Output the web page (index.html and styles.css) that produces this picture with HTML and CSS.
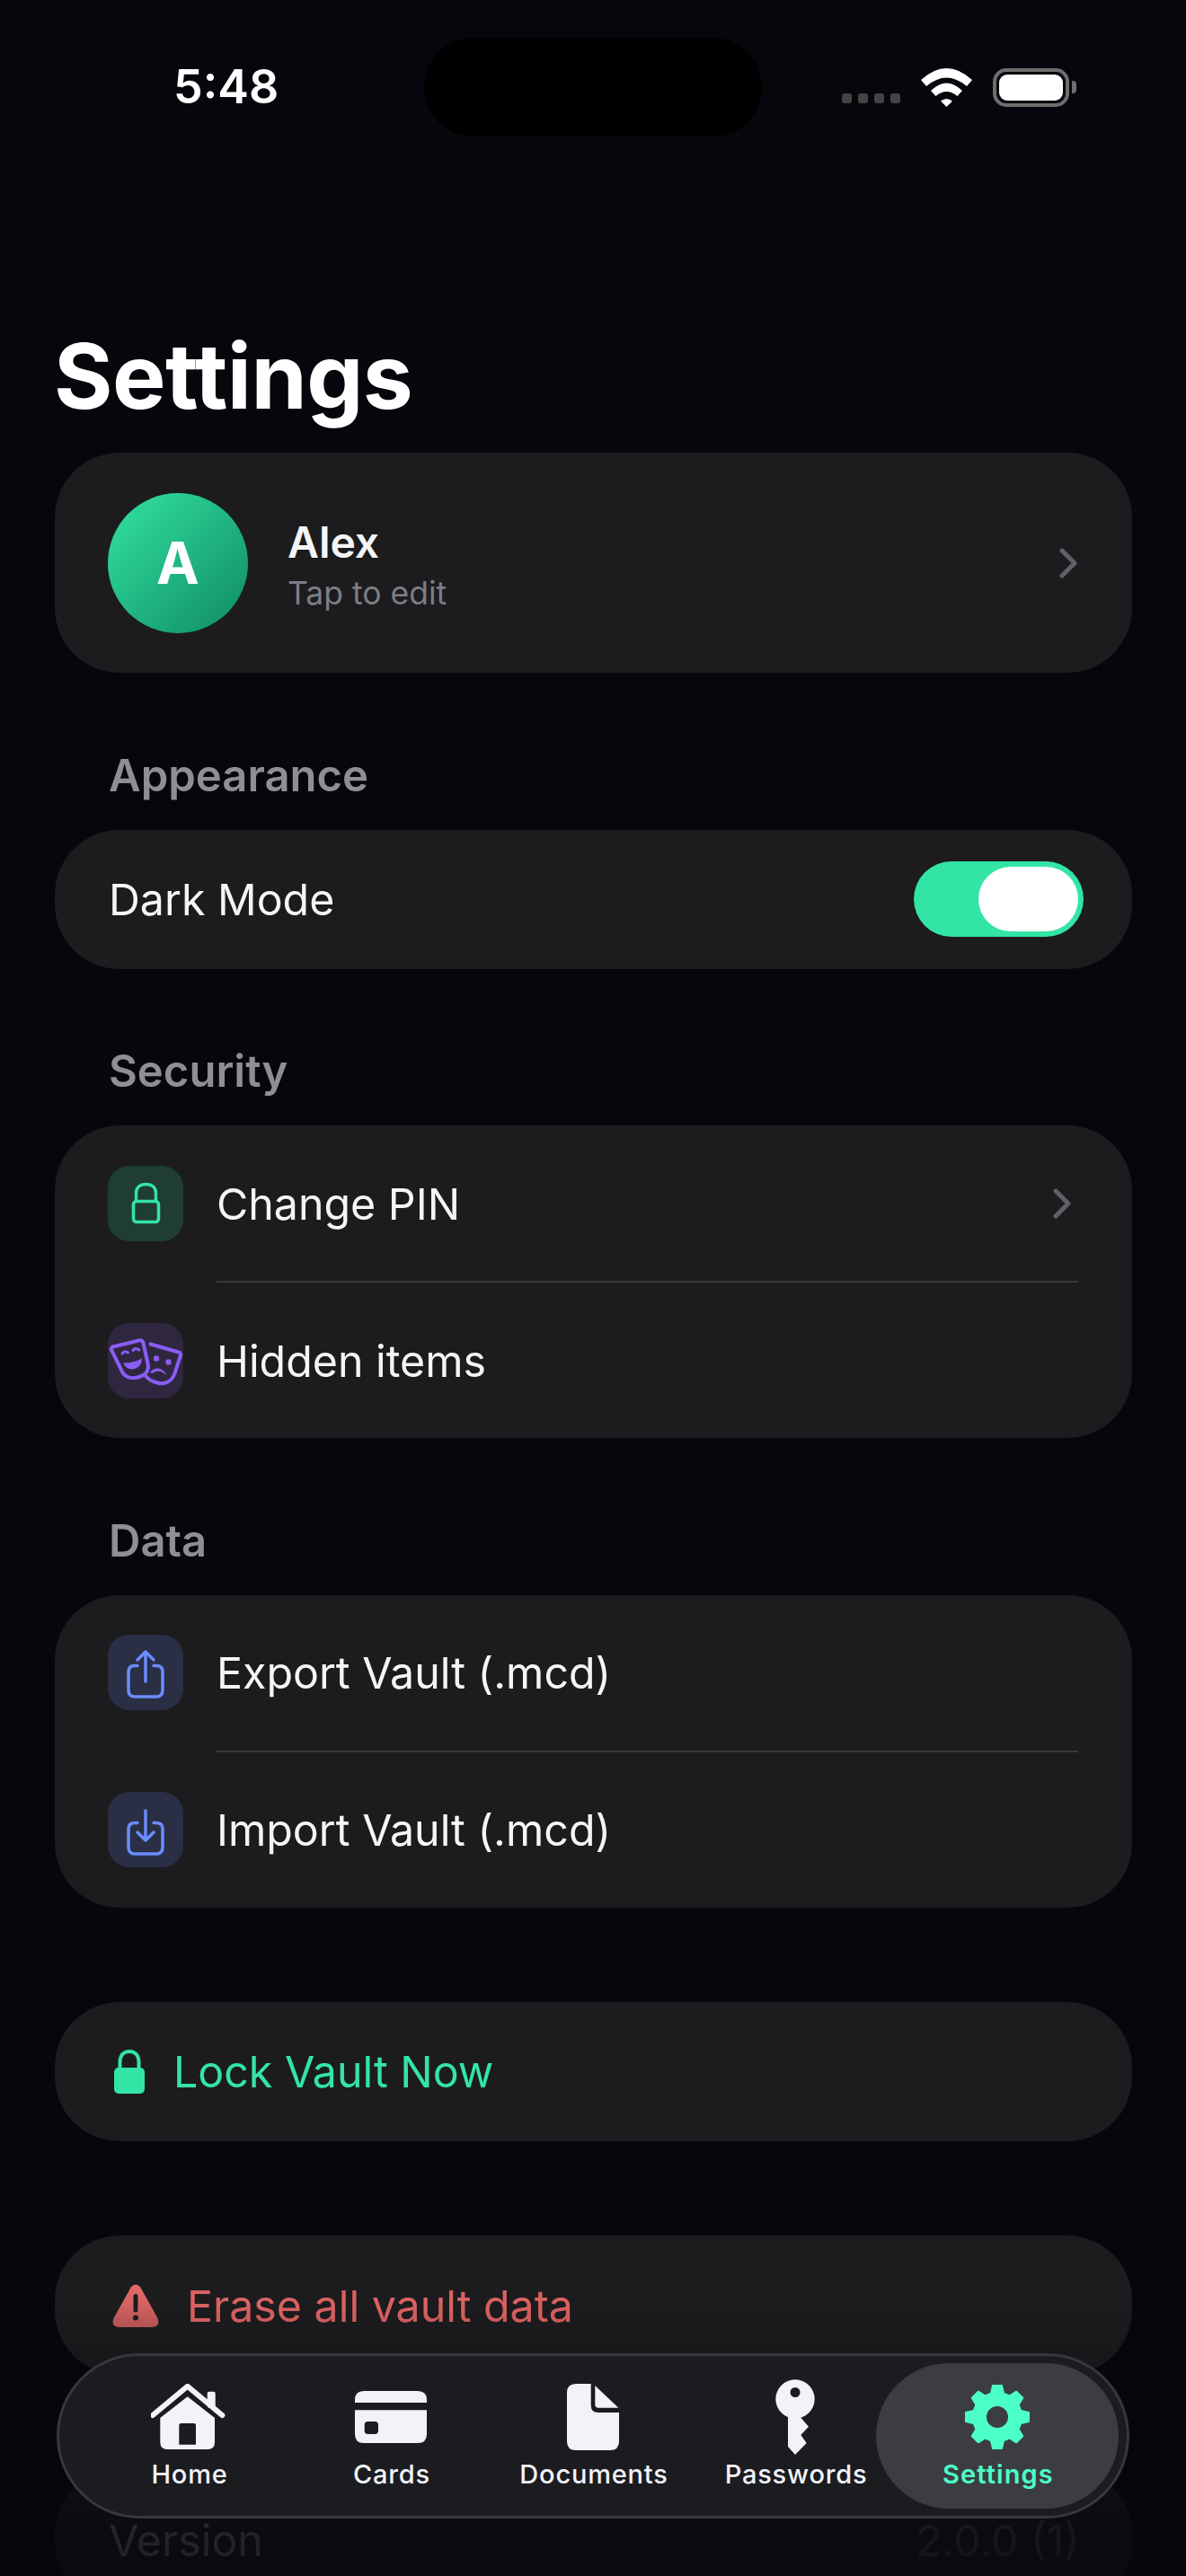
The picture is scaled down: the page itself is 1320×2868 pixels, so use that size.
FILE: index.html
```html
<!DOCTYPE html>
<html lang="en">
<head>
<meta charset="utf-8">
<title>Settings</title>
<link rel="stylesheet" href="styles.css">
</head>
<body>
<div class="screen">
  <header class="status">
    <span class="time">5:48</span>
    <div class="island"></div>
    <div class="status-right">
      <div class="signal"><i></i><i></i><i></i><i></i></div>
      <svg class="wifi" viewBox="0 0 57 43"><path d="M0 13Q28.500 -13 57 13L51 20Q28.500 1 6 20Z"/><path d="M11 25Q28.500 8 46 25L40.500 31Q28.500 21 16.500 31Z"/><path d="M22 36.500Q28.500 31.500 35 36.500L28.500 43Z"/></svg>
      <div class="battery"><div class="battery-level"></div></div>
      <div class="battery-nub"></div>
    </div>
  </header>

  <main class="content">
    <h1 class="title">Settings</h1>

    <section class="card profile">
      <div class="avatar">A</div>
      <div class="profile-text">
        <div class="profile-name">Alex</div>
        <div class="profile-sub">Tap to edit</div>
      </div>
      <svg class="chevron" viewBox="0 0 20 34"><path d="M3 3L17 17L3 31"/></svg>
    </section>

    <h2 class="section-label">Appearance</h2>
    <section class="card row-single">
      <span class="row-text">Dark Mode</span>
      <div class="toggle"><div class="toggle-thumb"></div></div>
    </section>

    <h2 class="section-label">Security</h2>
    <section class="card">
      <div class="row row-chevron">
        <div class="icon-box icon-green">
          <svg viewBox="0 0 84 84"><rect x="28.500" y="39.500" width="28" height="23" rx="3.500"/><path d="M31.500 39V30.500C31.500 24 36 20.500 42.500 20.500S53.500 24 53.500 30.500V39"/></svg>
        </div>
        <span class="row-text">Change PIN</span>
        <svg class="chevron" viewBox="0 0 20 34"><path d="M3 3L17 17L3 31"/></svg>
      </div>
      <div class="divider"></div>
      <div class="row">
        <div class="icon-box icon-purple">
          <svg viewBox="0 0 84 84">
            <path d="M5.500 26.500L34.500 19.500C37 19 39 20 39.500 22.500L44.500 45C46.500 54 41 58.500 33 60.500C24.500 62.500 17.500 59.500 14.500 51L4 30C3.500 28.500 4 27 5.500 26.500Z"/>
            <path d="M47.500 23.500L79 32.500C80.500 33 81.500 34.500 81 36L74.500 56C71.500 65 63.500 69 55 66.500C49 65 44 62 41.500 58"/>
            <path class="solid" d="M16 34Q19 30 22.500 33M28 30.500Q31 27 35 30"/>
            <path class="fill" d="M17 44.500Q27 45 38 39.500Q38 48 30 51Q21 53 17 44.500Z"/>
            <circle class="fill" cx="54" cy="39.500" r="3.200"/><circle class="fill" cx="67.500" cy="43.500" r="3.200"/>
            <path class="fill" d="M47 55Q56 44 66 58L62.500 56Q56 51 49.500 56Z"/>
          </svg>
        </div>
        <span class="row-text">Hidden items</span>
      </div>
    </section>

    <h2 class="section-label">Data</h2>
    <section class="card">
      <div class="row">
        <div class="icon-box icon-blue">
          <svg viewBox="0 0 84 84"><path d="M33 34.500H30C25 34.500 23 37 23 41.500V61.500C23 66.500 25.500 69 30 69H54C58.500 69 61 66.500 61 61.500V41.500C61 37 58.500 34.500 54 34.500H51"/><path d="M42 52V20M33 28L42 19L51 28"/></svg>
        </div>
        <span class="row-text">Export Vault (.mcd)</span>
      </div>
      <div class="divider"></div>
      <div class="row">
        <div class="icon-box icon-blue">
          <svg viewBox="0 0 84 84"><path d="M33 34.500H30C25 34.500 23 37 23 41.500V61.500C23 66.500 25.500 69 30 69H54C58.500 69 61 66.500 61 61.500V41.500C61 37 58.500 34.500 54 34.500H51"/><path d="M42 21V53M33 45L42 54L51 45"/></svg>
        </div>
        <span class="row-text">Import Vault (.mcd)</span>
      </div>
    </section>

    <section class="card row-single action action-lock">
      <svg class="lock-solid" viewBox="0 0 34 50"><path class="shackle" d="M6.500 22V14C6.500 6.500 10.500 2 17 2S27.500 6.500 27.500 14V22"/><rect x="0" y="20" width="34" height="29" rx="5"/></svg>
      <span class="action-text-green">Lock Vault Now</span>
    </section>

    <section class="card row-single action action-erase">
      <svg class="warn" viewBox="0 0 52 48"><defs><linearGradient id="warnGrad" x1="0" y1="0" x2="0" y2="1"><stop offset="0" stop-color="#e46a6a"/><stop offset="1" stop-color="#c45a5a"/></linearGradient></defs><path fill="url(#warnGrad)" fill-rule="evenodd" d="M21 3Q26 -2 31 3L50.500 38Q54 47 44 48H8Q-2 47 1.500 38ZM23.500 13.500V29Q23.500 31.500 26 31.500T28.500 29V13.500Q28.500 11 26 11T23.500 13.500ZM26 34.500A3 3 0 1 0 26 40.500A3 3 0 1 0 26 34.500Z"/></svg>
      <span class="action-text-red">Erase all vault data</span>
    </section>

    <section class="card row-single version">
      <span class="version-label">Version</span>
      <span class="version-value">2.0.0 (1)</span>
    </section>
  </main>

  <div class="fade"></div>

  <nav class="tabbar">
    <div class="tab">
      <svg class="tab-icon" width="84" height="74" viewBox="0 0 84 74"><path class="roof" d="M2 35L40.700 2.700L79.300 35"/><rect x="62.700" y="8.700" width="9" height="18" rx="2"/><path fill-rule="evenodd" d="M40.700 14.300L71 38V65Q71 73 63 73H18.300Q10.300 73 10.300 65V38ZM33.300 44Q31.300 44 31.300 46V67.700H50V46Q50 44 48 44Z"/></svg>
      <span class="tab-label">Home</span>
    </div>
    <div class="tab">
      <svg class="tab-icon" width="80" height="74" viewBox="0 0 80 74"><path d="M10 8H70Q80 8 80 18V21H0V18Q0 8 10 8Z"/><path fill-rule="evenodd" d="M0 29.300H80V56Q80 66 70 66H10Q0 66 0 56ZM14.500 42Q10.700 42 10.700 45.700V52.300Q10.700 56 14.500 56H22.200Q26 56 26 52.300V45.700Q26 42 22.200 42Z"/></svg>
      <span class="tab-label">Cards</span>
    </div>
    <div class="tab">
      <svg class="tab-icon" width="58" height="74" viewBox="0 0 58 74"><path d="M10 0H26.700V24Q26.700 32 34.700 32H58V64Q58 74 48 74H10Q0 74 0 64V10Q0 0 10 0Z"/><path d="M31.300 2L57.300 26.700H35Q31.300 26.700 31.300 23Z"/></svg>
      <span class="tab-label">Documents</span>
    </div>
    <div class="tab">
      <svg class="tab-icon key" width="44" height="84" viewBox="0 0 44 84"><path fill-rule="evenodd" d="M22 0.300A21.700 21.700 0 1 1 22 43.700A21.700 21.700 0 1 1 22 0.300ZM22 9A5.500 5.500 0 1 0 22 20A5.500 5.500 0 1 0 22 9Z"/><path d="M14 38V75L22 84L34.700 71L28.300 62L37 52.700L28.300 42.700V36Z"/></svg>
      <span class="tab-label">Passwords</span>
    </div>
    <div class="tab tab-active">
      <svg class="tab-icon" width="72" height="74" viewBox="0 0 72 74"><g transform="translate(0 1)"><circle class="gear-ring" cx="36" cy="36" r="20"/><path class="gear-tooth" d="M31 1H41L44 14H28Z"/><path class="gear-tooth" d="M31 1H41L44 14H28Z" transform="rotate(45 36 36)"/><path class="gear-tooth" d="M31 1H41L44 14H28Z" transform="rotate(90 36 36)"/><path class="gear-tooth" d="M31 1H41L44 14H28Z" transform="rotate(135 36 36)"/><path class="gear-tooth" d="M31 1H41L44 14H28Z" transform="rotate(180 36 36)"/><path class="gear-tooth" d="M31 1H41L44 14H28Z" transform="rotate(225 36 36)"/><path class="gear-tooth" d="M31 1H41L44 14H28Z" transform="rotate(270 36 36)"/><path class="gear-tooth" d="M31 1H41L44 14H28Z" transform="rotate(315 36 36)"/></g></svg>
      <span class="tab-label">Settings</span>
    </div>
  </nav>
</div>
</body>
</html>
```

FILE: styles.css
```css
* { box-sizing: border-box; }
html, body { margin: 0; padding: 0; background: #05070c; }
body { font-family: Inter, "Liberation Sans", sans-serif; color: #f5f5f7; }

.screen { position: relative; width: 1320px; height: 2868px; overflow: hidden; background: #05070c; }

.status { display: flex; align-items: center; justify-content: space-between; height: 194px; padding: 0 122px 0 193px; }
.time { font-size: 52px; font-weight: 600; color: #fff; line-height: 1; }
.island { position: absolute; left: 472px; top: 42px; width: 376px; height: 110px; border-radius: 55px; background: #000; }
.status-right { display: flex; align-items: center; }
.signal { display: flex; gap: 7px; margin-top: 24px; margin-right: 23px; }
.signal i { width: 11px; height: 11px; border-radius: 3px; background: #444; }
.wifi { width: 57px; height: 43px; fill: #fff; margin-right: 23px; }
.battery { width: 85px; height: 43px; border: 4px solid #6e6e6e; border-radius: 15px; padding: 3px; }
.battery-level { width: 100%; height: 100%; border-radius: 9px; background: #fff; }
.battery-nub { width: 5px; height: 14px; margin-left: 3px; border-radius: 0 4px 4px 0; background: #6e6e6e; }

.content { padding: 0 60px 0 61px; }
.title { margin: 179px 0 39px -1px; font-size: 100px; font-weight: 700; line-height: 92px; color: #fff; letter-spacing: -0.5px; }

.card { background: #1c1c1e; border-radius: 72px; }
.profile { display: flex; align-items: center; height: 245px; padding: 0 61px 0 59px; }
.avatar { display: flex; align-items: center; justify-content: center; flex: none; width: 156px; height: 156px; border-radius: 50%; background: linear-gradient(135deg, #33e3a0, #0f8a64); color: #fff; font-size: 64px; font-weight: 700; }
.profile-text { flex: 1; margin-left: 44px; padding-top: 3px; }
.profile-name { font-size: 48px; font-weight: 600; line-height: 60px; color: #f5f5f7; }
.profile-sub { margin-top: 5px; font-size: 35.500px; line-height: 44px; color: #7d7d85; }

.chevron { flex: none; width: 20px; height: 34px; fill: none; stroke: #5f6068; stroke-width: 5; stroke-linecap: round; stroke-linejoin: round; }

.section-label { margin: 84.500px 0 30px 60px; font-size: 49px; font-weight: 600; line-height: 60px; color: #8e8e93; }

.row-single { display: flex; align-items: center; justify-content: space-between; height: 155px; padding: 0 54px 0 60px; }
.row-text { flex: 1; padding-top: 2px; font-size: 48.300px; line-height: 60px; color: #f5f5f7; }

.toggle { display: flex; justify-content: flex-end; width: 189px; height: 84px; padding: 6px; border-radius: 42px; background: #33e5a5; }
.toggle-thumb { width: 111px; height: 72px; border-radius: 36px; background: #fff; }

.row { display: flex; align-items: center; height: 173px; padding: 0 60px 0 59px; }
.row-chevron { padding-right: 68px; }
.divider { height: 2px; margin: 0 60px 0 180px; background: #38383a; }
.icon-box { flex: none; width: 84px; height: 84px; margin-right: 37px; border-radius: 24px; }
.icon-box svg { display: block; width: 84px; height: 84px; fill: none; stroke-width: 3.500; stroke-linecap: round; stroke-linejoin: round; }
.icon-green { background: #1f3d34; }
.icon-green svg { stroke: #33e5a5; }
.icon-purple { background: #2f2740; }
.icon-purple svg { stroke: #8b5cf6; stroke-width: 4; }
.icon-purple .fill { fill: #8b5cf6; stroke: none; }
.icon-purple .solid { stroke-width: 3; }
.icon-blue { background: #2a2f45; }
.icon-blue svg { stroke: #6b8cff; }

.action { justify-content: flex-start; padding: 0 0 0 66px; }
.action-lock { margin-top: 105.500px; }
.action-erase { margin-top: 105px; padding-left: 64px; }
.lock-solid { width: 34px; height: 50px; margin-right: 32px; fill: #33e5a5; }
.lock-solid .shackle { fill: none; stroke: #33e5a5; stroke-width: 4; }
.action-text-green { padding-top: 1px; font-size: 48.300px; color: #33e5a5; line-height: 60px; }
.warn { width: 52px; height: 48px; margin-right: 31px; }
.action-text-red { padding-top: 2px; font-size: 48.300px; color: #db6161; line-height: 60px; }

.version { margin-top: 105px; padding-right: 58px; }
.version-label { padding-top: 4px; font-size: 48.300px; color: #8e8e93; line-height: 60px; }
.version-value { padding-top: 4px; font-size: 48.300px; color: #505055; line-height: 60px; }

.fade { position: absolute; left: 0; right: 0; bottom: 0; height: 420px; background: linear-gradient(to bottom, rgba(5,7,12,0) 28%, rgba(5,7,12,0.12) 36%, rgba(5,7,12,0.78) 88%, rgba(5,7,12,0.82)); pointer-events: none; }

.tabbar { position: absolute; left: 63px; top: 2620px; display: flex; width: 1194px; height: 184px; padding: 8px 0 8px 31px; border: 3px solid #37383f; border-radius: 92px; background: #1b1c20; }
.tab { position: relative; display: flex; flex: none; flex-direction: column; align-items: center; width: 225px; }
.tab-active::before { content: ""; position: absolute; top: 0; bottom: 0; left: -22px; right: -23px; border-radius: 81px; background: #3c3d41; }
.tab-icon { position: relative; flex: none; margin-top: 23px; fill: #f2f3f8; }
.tab-icon.key { margin-top: 18px; height: 84px; margin-bottom: -5px; }
.roof { fill: none; stroke: #f2f3f8; stroke-width: 6; stroke-linecap: round; stroke-linejoin: round; }
.tab-label { position: relative; margin-top: 9px; margin-left: 3px; font-size: 29px; font-weight: 500; line-height: 36px; color: #f2f3f8; letter-spacing: 0.8px; white-space: nowrap; }
.tab-active .tab-label { color: #4cffc7; font-weight: 600; letter-spacing: 1.1px; }
.gear-ring { fill: none; stroke: #4cffc7; stroke-width: 16; }
.gear-tooth { fill: #4cffc7; stroke: #4cffc7; stroke-width: 2; stroke-linejoin: round; }
```
